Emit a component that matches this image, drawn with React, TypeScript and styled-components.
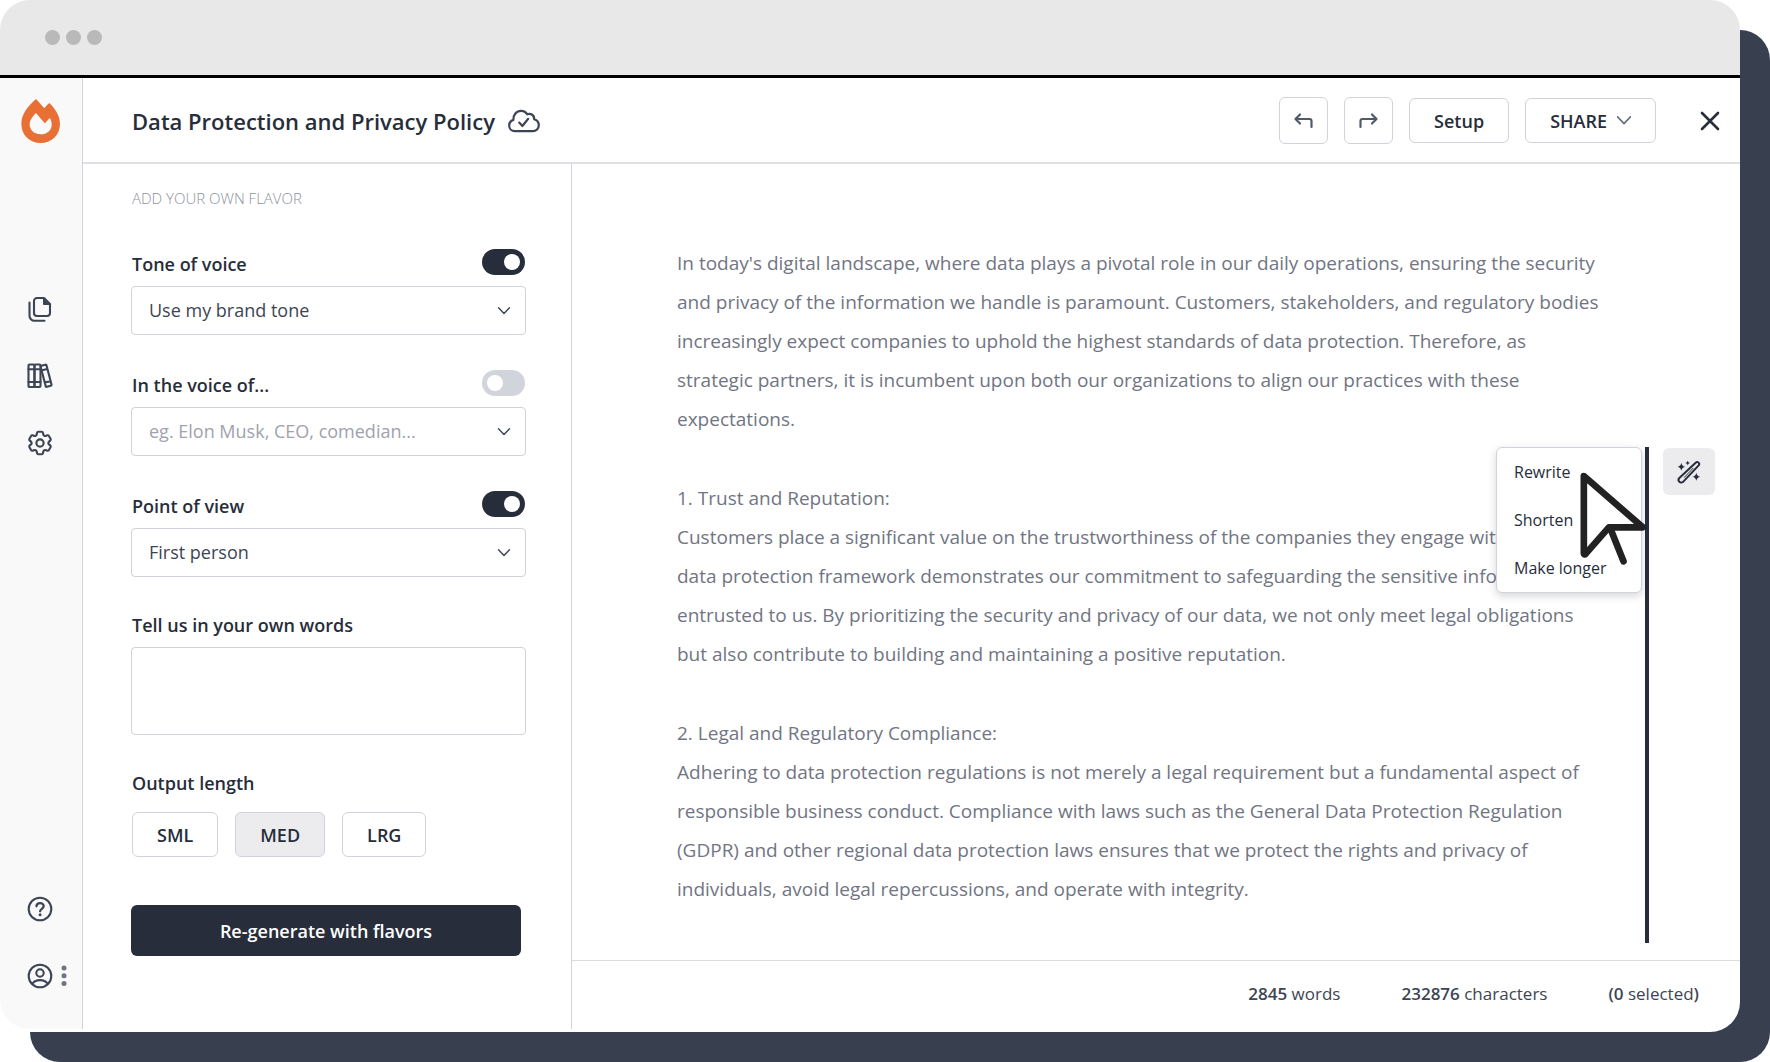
import React, { useState } from "react";
import styled, { createGlobalStyle, css } from "styled-components";

const ink = "#272d3a";
const slate = "#3d4554";
const line = "#d1d3da";

const GlobalStyle = createGlobalStyle`
  *, *::before, *::after { box-sizing: border-box; }
  body { margin: 0; background: #fff; font-family: "Open Sans", "Noto Sans", sans-serif; color: ${ink}; }
  button, input, select, textarea { font: inherit; color: inherit; margin: 0; }
  h1, h2, p, nav, ul { margin: 0; padding: 0; }
  svg { display: block; flex: none; }
`;

const Stage = styled.div`
  padding: 0 30px 30px 0;
`;

const Window = styled.div`
  display: flex;
  flex-direction: column;
  min-height: calc(100vh - 30px);
  padding-bottom: 3px;
  background: #fff;
  border-radius: 30px;
  box-shadow: 30px 30px 0 #384050;
`;

const Chrome = styled.div`
  display: flex;
  align-items: center;
  gap: 6px;
  height: 78px;
  padding-left: 45px;
  background: #e8e8e8;
  border-bottom: 3px solid #000;
  border-radius: 30px 30px 0 0;
`;

const Dot = styled.span`
  width: 15px;
  height: 15px;
  border-radius: 50%;
  background: #b9b9b9;
`;

const Shell = styled.div`
  flex: 1;
  display: grid;
  grid-template-columns: 83px minmax(0, 1fr);
`;

const Sidebar = styled.nav`
  display: flex;
  flex-direction: column;
  align-items: flex-start;
  padding: 20px 0 33px;
  background: #f9f9f9;
  border-right: 1px solid ${line};
  border-bottom-left-radius: 30px;
`;

const Logo = styled.a`
  display: flex;
  margin: 0 0 145px 20px;
`;

const NavGroup = styled.div<{ $end?: boolean }>`
  display: flex;
  flex-direction: column;
  gap: 27px;
  margin-top: ${(p) => (p.$end ? "auto" : "0")};
`;

const NavRow = styled.div`
  display: flex;
  align-items: center;
`;

const plainButton = css`
  display: flex;
  align-items: center;
  justify-content: center;
  padding: 0;
  border: 0;
  background: none;
  cursor: pointer;
`;

const NavButton = styled.button`
  ${plainButton}
  width: 40px;
  height: 40px;
  margin-left: 20px;
  color: ${slate};
`;

const MoreButton = styled.button`
  ${plainButton}
  width: 8px;
  height: 40px;
  color: #6f7482;
`;

const Main = styled.main`
  display: flex;
  flex-direction: column;
  min-width: 0;
`;

const Header = styled.header`
  display: flex;
  align-items: center;
  height: 86px;
  padding: 1px 20px 0 49px;
  border-bottom: 2px solid #dfe0e6;
`;

const Title = styled.h1`
  font-size: 22px;
  line-height: 32px;
  font-weight: 600;
  margin-right: 13px;
`;

const Tools = styled.div`
  display: flex;
  align-items: center;
  gap: 16px;
  margin-left: auto;
`;

const Outlined = styled.button<{ $active?: boolean }>`
  ${plainButton}
  gap: 10px;
  height: 45px;
  padding: 0 24px;
  font-size: 18px;
  line-height: 24px;
  font-weight: 600;
  border: 1px solid ${line};
  border-radius: 6px;
  background: ${(p) => (p.$active ? "#ececef" : "#fff")};
`;

const SquareButton = styled(Outlined)`
  width: 49px;
  height: 47px;
  padding: 0;
  color: #525967;
`;

const CloseButton = styled.button`
  ${plainButton}
  margin-left: 28px;
`;

const Columns = styled.div`
  flex: 1;
  display: grid;
  grid-template-columns: 489px minmax(0, 1fr);
`;

const Panel = styled.form`
  padding: 24px 45px 0 48px;
  border-right: 1px solid ${line};
`;

const PanelTitle = styled.h2`
  padding-left: 1px;
  font-size: 15px;
  line-height: 20px;
  font-weight: 300;
  color: #8d919e;
  margin-bottom: 41px;
`;

const Fields = styled.div`
  display: flex;
  flex-direction: column;
  gap: 35px;
  margin-bottom: 36px;
`;

const Field = styled.div`
  display: flex;
  flex-direction: column;
  gap: 10px;
`;

const FieldHead = styled.div`
  display: flex;
  justify-content: space-between;
  align-items: flex-end;
  height: 27px;
  padding-right: 1px;
`;

const Label = styled.label`
  padding-left: 1px;
  font-size: 18px;
  line-height: 24px;
  font-weight: 600;
`;

const Switch = styled.input`
  appearance: none;
  align-self: flex-start;
  width: 43px;
  height: 26px;
  padding: 5px;
  border-radius: 13px;
  background: #d1d4da;
  cursor: pointer;
  &::before {
    content: "";
    display: block;
    width: 16px;
    height: 16px;
    border-radius: 50%;
    background: #fff;
  }
  &:checked { background: ${ink}; }
  &:checked::before { margin-left: auto; }
`;

const Control = styled.div`
  display: grid;
  align-items: center;
  > * { grid-area: 1 / 1; }
  > svg { justify-self: end; margin-right: 16px; pointer-events: none; }
`;

const box = css`
  width: 100%;
  border: 1px solid ${line};
  border-radius: 4px;
  background: #fff;
  font-size: 18px;
  line-height: 24px;
  color: ${slate};
`;

const Select = styled.select`
  ${box}
  appearance: none;
  height: 49px;
  padding: 0 40px 2px 17px;
`;

const TextInput = styled.input`
  ${box}
  height: 49px;
  padding: 0 40px 2px 17px;
  &::placeholder { color: #9fa2ae; opacity: 1; }
`;

const TextArea = styled.textarea`
  ${box}
  display: block;
  height: 88px;
  padding: 12px 17px;
  resize: none;
`;

const Sizes = styled.fieldset`
  min-width: 0;
  margin: 36px 0 48px;
  padding: 0 0 0 1px;
  border: 0;
`;

const Legend = styled.legend`
  padding: 0;
  margin-bottom: 17px;
  font-size: 18px;
  line-height: 24px;
  font-weight: 600;
`;

const SizeRow = styled.div`
  display: flex;
  gap: 17px;
`;

const Primary = styled.button`
  ${plainButton}
  width: 100%;
  max-width: 390px;
  height: 51px;
  border-radius: 6px;
  background: ${ink};
  color: #fff;
  font-size: 18px;
  font-weight: 600;
`;

const Editor = styled.section`
  display: flex;
  flex-direction: column;
  min-width: 0;
`;

const Page = styled.div`
  flex: 1;
  display: grid;
  grid-template-columns: minmax(0, 1fr) 4px 52px;
  column-gap: 14px;
  padding: 0 25px 17px 105px;
`;

const Article = styled.article`
  display: flex;
  flex-direction: column;
  gap: 40px;
  padding: 80px 29px 0 0;
  font-size: 19px;
  line-height: 39px;
  color: #717583;
`;

const Heading = styled.h2`
  font: inherit;
`;

const Marker = styled.div`
  position: relative;
  margin-top: 283px;
  background: ${ink};
`;

const Menu = styled.div`
  position: absolute;
  top: 0;
  right: 7px;
  width: 146px;
  border: 1px solid ${line};
  border-radius: 6px;
  background: #fff;
  box-shadow: 0 3px 8px rgba(39, 45, 58, 0.2);
`;

const MenuItem = styled.button`
  ${plainButton}
  justify-content: flex-start;
  width: 100%;
  height: 48px;
  padding-left: 17px;
  font-size: 16px;
  line-height: 24px;
  white-space: nowrap;
`;

const Pointer = styled.svg`
  position: absolute;
  top: 25px;
  right: 2px;
  pointer-events: none;
`;

const WandButton = styled.button`
  ${plainButton}
  height: 47px;
  margin-top: 284px;
  border-radius: 6px;
  background: #ececef;
`;

const Status = styled.footer`
  display: flex;
  justify-content: flex-end;
  align-items: center;
  gap: 61px;
  height: 69px;
  padding: 0 41px 2px 0;
  border-top: 1px solid #dcdde2;
  font-size: 17px;
  line-height: 24px;
  color: ${slate};
  b { font-weight: 600; }
`;

const Chevron = ({ width = 12 }: { width?: number }) => (
  <svg width={width} height={width * 0.6} viewBox="0 0 12 7.2" fill="none" stroke={width > 12 ? "#6a7080" : slate} strokeWidth={1.4} strokeLinecap="round" strokeLinejoin="round" overflow="visible">
    <path d="M.5.7 6 6.5 11.5.7" />
  </svg>
);

const stroke = { fill: "none", stroke: "currentColor", strokeLinecap: "round", strokeLinejoin: "round" } as const;

const Flame = () => (
  <svg width="41" height="46" viewBox="0 0 123 138">
    <path fill="#e87034" fillRule="evenodd" d="M48 3C55 11 64 20 73 31 77 25 82 20 88 15 104 31 120 53 120 77 120 110 96 135 62 135S4 110 4 77C4 48 26 22 48 3ZM48 45C40 53 29 66 29 79 29 97 43 109 62 109S95 97 95 80C95 72 93 65 89 60L75 76C66 67 58 56 48 45Z" />
  </svg>
);

const Files = () => (
  <svg width="24" height="27" viewBox="0 0 24 27" {...stroke} strokeWidth={2.1}>
    <path d="M9 2h7l6 6v9a3 3 0 0 1-3 3H9a3 3 0 0 1-3-3V5a3 3 0 0 1 3-3Z" />
    <path d="M15.500 2v6.500H22Z" fill="currentColor" strokeWidth={1} />
    <path d="M1.500 6.500V19.500a5 5 0 0 0 5 5.200H16.500" />
  </svg>
);

const Books = () => (
  <svg width="26" height="26" viewBox="0 0 26 26" {...stroke} strokeWidth={2.1}>
    <rect x="1.500" y="1.500" width="6" height="22.500" rx="1" />
    <rect x="7.500" y="1.500" width="6" height="22.500" rx="1" />
    <path d="M1.500 6.200h12M1.500 19h12" />
    <path d="m14.300 2.700 4-1a1 1 0 0 1 1.200.7l5 19.200a1 1 0 0 1-.8 1.200l-3.800 1a1 1 0 0 1-1.200-.7l-5-19.200a1 1 0 0 1 .6-1.200ZM15 7.300l5.400-1.400M18 19.500l5.500-1.400" />
  </svg>
);

const Gear = () => (
  <svg width="30" height="30" viewBox="0 0 24 24" {...stroke} strokeWidth={1.700}>
    <path d="M9.594 3.940c.09-.542.56-.94 1.110-.94h2.593c.55 0 1.020.398 1.110.940l.213 1.281c.063.374.313.686.645.870.074.040.147.083.22.127.325.196.720.257 1.075.124l1.217-.456a1.125 1.125 0 0 1 1.370.490l1.296 2.247a1.125 1.125 0 0 1-.26 1.431l-1.003.827c-.293.241-.438.613-.430.992a7.723 7.723 0 0 1 0 .255c-.008.378.137.750.430.991l1.004.827c.424.350.534.955.260 1.430l-1.298 2.247a1.125 1.125 0 0 1-1.369.491l-1.217-.456c-.355-.133-.750-.072-1.076.124a6.470 6.470 0 0 1-.220.128c-.331.183-.581.495-.644.869l-.213 1.281c-.090.543-.560.940-1.110.940h-2.594c-.550 0-1.019-.398-1.110-.940l-.213-1.281c-.062-.374-.312-.686-.644-.870a6.520 6.520 0 0 1-.220-.127c-.325-.196-.720-.257-1.076-.124l-1.217.456a1.125 1.125 0 0 1-1.369-.490l-1.297-2.247a1.125 1.125 0 0 1 .260-1.431l1.004-.827c.292-.240.437-.613.430-.991a6.932 6.932 0 0 1 0-.255c.007-.380-.138-.751-.430-.992l-1.004-.827a1.125 1.125 0 0 1-.260-1.430l1.297-2.247a1.125 1.125 0 0 1 1.370-.491l1.216.456c.356.133.751.072 1.076-.124.072-.044.146-.086.220-.128.332-.183.582-.495.644-.869l.214-1.280Z" />
    <circle cx="12" cy="12" r="2.900" />
  </svg>
);

const Help = () => (
  <svg width="26" height="26" viewBox="0 0 26 26" {...stroke} strokeWidth={2.100}>
    <circle cx="13" cy="13" r="11.300" />
    <path d="M9.500 10.300c0-4.300 7.200-4.300 7.200-.2 0 2.700-3.600 2.700-3.600 5.200" strokeWidth={2.300} />
    <circle cx="13.100" cy="18.700" r="1.500" fill="currentColor" stroke="none" />
  </svg>
);

const User = () => (
  <svg width="26" height="26" viewBox="0 0 26 26" {...stroke} strokeWidth={2.100}>
    <circle cx="13" cy="13" r="11.300" />
    <circle cx="13" cy="10" r="3.700" />
    <path d="M5.500 20.500c3-4.500 12-4.500 15 0" />
  </svg>
);

const Dots = () => (
  <svg width="6" height="22" viewBox="0 0 6 22" fill="currentColor">
    <circle cx="3" cy="3" r="2.500" />
    <circle cx="3" cy="10.800" r="2.500" />
    <circle cx="3" cy="18.600" r="2.500" />
  </svg>
);

const CloudCheck = () => (
  <svg width="32" height="24" viewBox="0 0 32 24" {...stroke} stroke={slate} strokeWidth={2.200}>
    <path d="M7 22.200C3.500 22.200 1.200 19.500 1.200 16.500c0-2.900 1.700-4.800 4.200-5.600C5 6 8.500 1.800 13 1.800c2.700 0 5 1.300 6.200 3.500 3.600-1.500 7.300 1 6.900 4.900 3 .8 4.700 3.200 4.700 6 0 3.300-2.600 6-6 6Z" />
    <path d="m11.200 13.600 3.200 3.400 5.800-7.200" />
  </svg>
);

const Undo = ({ flip }: { flip?: boolean }) => (
  <svg width="19" height="16" viewBox="0 0 19 16" {...stroke} strokeWidth={2.200}>
    <path d={flip ? "M13 1.500 17.500 6 13 10.500M17 6H3.500a2 2 0 0 0-2 2v6" : "M6 1.500 1.500 6 6 10.500M2 6h13.500a2 2 0 0 1 2 2v6"} />
  </svg>
);

const Cross = () => (
  <svg width="20" height="20" viewBox="0 0 20 20" {...stroke} strokeWidth={2.600}>
    <path d="m2 2 16 16M18 2 2 18" />
  </svg>
);

const Wand = () => (
  <svg width="24" height="24" viewBox="0 0 72 72" {...stroke} strokeWidth={6}>
    <path d="M7 54 56 8c6-5 14 2 9 8L19 65c-9 7-19-3-12-11Z" />
    <path d="M22 52 48 25" strokeWidth={3} />
    <g fill="currentColor" stroke="none">
      <path d="M13 8q2 11 12 12-10 2-12 12-2-10-12-12 10-1 12-12ZM32 2q1 6 7 7-6 1-7 7-1-6-7-7 6-1 7-7ZM58 38q2 11 12 12-10 2-12 12-2-10-12-12 10-1 12-12Z" />
    </g>
  </svg>
);

const paragraphs = [
  {
    text: "In today's digital landscape, where data plays a pivotal role in our daily operations, ensuring the security and privacy of the information we handle is paramount. Customers, stakeholders, and regulatory bodies increasingly expect companies to uphold the highest standards of data protection. Therefore, as strategic partners, it is incumbent upon both our organizations to align our practices with these expectations.",
  },
  {
    heading: "1. Trust and Reputation:",
    text: "Customers place a significant value on the trustworthiness of the companies they engage with. A robust data protection framework demonstrates our commitment to safeguarding the sensitive information entrusted to us. By prioritizing the security and privacy of our data, we not only meet legal obligations but also contribute to building and maintaining a positive reputation.",
  },
  {
    heading: "2. Legal and Regulatory Compliance:",
    text: "Adhering to data protection regulations is not merely a legal requirement but a fundamental aspect of responsible business conduct. Compliance with laws such as the General Data Protection Regulation (GDPR) and other regional data protection laws ensures that we protect the rights and privacy of individuals, avoid legal repercussions, and operate with integrity.",
  },
];

export default function App() {
  const [size, setSize] = useState("MED");
  return (
    <>
      <GlobalStyle />
      <Stage>
        <Window>
          <Chrome>
            <Dot />
            <Dot />
            <Dot />
          </Chrome>
          <Shell>
            <Sidebar>
              <Logo href="#" aria-label="Home"><Flame /></Logo>
              <NavGroup>
                <NavButton aria-label="Documents"><Files /></NavButton>
                <NavButton aria-label="Library"><Books /></NavButton>
                <NavButton aria-label="Settings"><Gear /></NavButton>
              </NavGroup>
              <NavGroup $end>
                <NavButton aria-label="Help"><Help /></NavButton>
                <NavRow>
                  <NavButton aria-label="Account"><User /></NavButton>
                  <MoreButton aria-label="More"><Dots /></MoreButton>
                </NavRow>
              </NavGroup>
            </Sidebar>
            <Main>
              <Header>
                <Title>Data Protection and Privacy Policy</Title>
                <CloudCheck />
                <Tools>
                  <SquareButton aria-label="Undo"><Undo /></SquareButton>
                  <SquareButton aria-label="Redo"><Undo flip /></SquareButton>
                  <Outlined>Setup</Outlined>
                  <Outlined>SHARE <Chevron width={14} /></Outlined>
                  <CloseButton aria-label="Close"><Cross /></CloseButton>
                </Tools>
              </Header>
              <Columns>
                <Panel onSubmit={(e) => e.preventDefault()}>
                  <PanelTitle>ADD YOUR OWN FLAVOR</PanelTitle>
                  <Fields>
                    <Field>
                      <FieldHead>
                        <Label htmlFor="tone">Tone of voice</Label>
                        <Switch type="checkbox" role="switch" aria-label="Use tone of voice" defaultChecked />
                      </FieldHead>
                      <Control>
                        <Select id="tone"><option>Use my brand tone</option></Select>
                        <Chevron />
                      </Control>
                    </Field>
                    <Field>
                      <FieldHead>
                        <Label htmlFor="voice">In the voice of...</Label>
                        <Switch type="checkbox" role="switch" aria-label="Use a voice" />
                      </FieldHead>
                      <Control>
                        <TextInput id="voice" placeholder="eg. Elon Musk, CEO, comedian..." />
                        <Chevron />
                      </Control>
                    </Field>
                    <Field>
                      <FieldHead>
                        <Label htmlFor="view">Point of view</Label>
                        <Switch type="checkbox" role="switch" aria-label="Use point of view" defaultChecked />
                      </FieldHead>
                      <Control>
                        <Select id="view"><option>First person</option></Select>
                        <Chevron />
                      </Control>
                    </Field>
                  </Fields>
                  <Field>
                    <Label htmlFor="words">Tell us in your own words</Label>
                    <TextArea id="words" />
                  </Field>
                  <Sizes>
                    <Legend>Output length</Legend>
                    <SizeRow>
                      {["SML", "MED", "LRG"].map((s) => (
                        <Outlined key={s} type="button" $active={s === size} onClick={() => setSize(s)}>{s}</Outlined>
                      ))}
                    </SizeRow>
                  </Sizes>
                  <Primary type="submit">Re-generate with flavors</Primary>
                </Panel>
                <Editor>
                  <Page>
                    <Article>
                      {paragraphs.map((p) => (
                        <div key={p.text}>
                          {p.heading && <Heading>{p.heading}</Heading>}
                          <p>{p.text}</p>
                        </div>
                      ))}
                    </Article>
                    <Marker>
                      <Menu>
                        <MenuItem>Rewrite</MenuItem>
                        <MenuItem>Shorten</MenuItem>
                        <MenuItem>Make longer</MenuItem>
                      </Menu>
                      <Pointer width="67" height="93" viewBox="0 0 200 279" stroke="#222" strokeWidth="20" strokeLinecap="round" strokeLinejoin="round">
                        <path d="M90 168 130 268" fill="none" />
                        <path d="M11 12 188 166H86L15 247Q11 248 11 243Z" fill="#fff" />
                      </Pointer>
                    </Marker>
                    <WandButton aria-label="Rewrite with AI"><Wand /></WandButton>
                  </Page>
                  <Status>
                    <span><b>2845</b> words</span>
                    <span><b>232876</b> characters</span>
                    <span><b>(0</b> selected<b>)</b></span>
                  </Status>
                </Editor>
              </Columns>
            </Main>
          </Shell>
        </Window>
      </Stage>
    </>
  );
}
